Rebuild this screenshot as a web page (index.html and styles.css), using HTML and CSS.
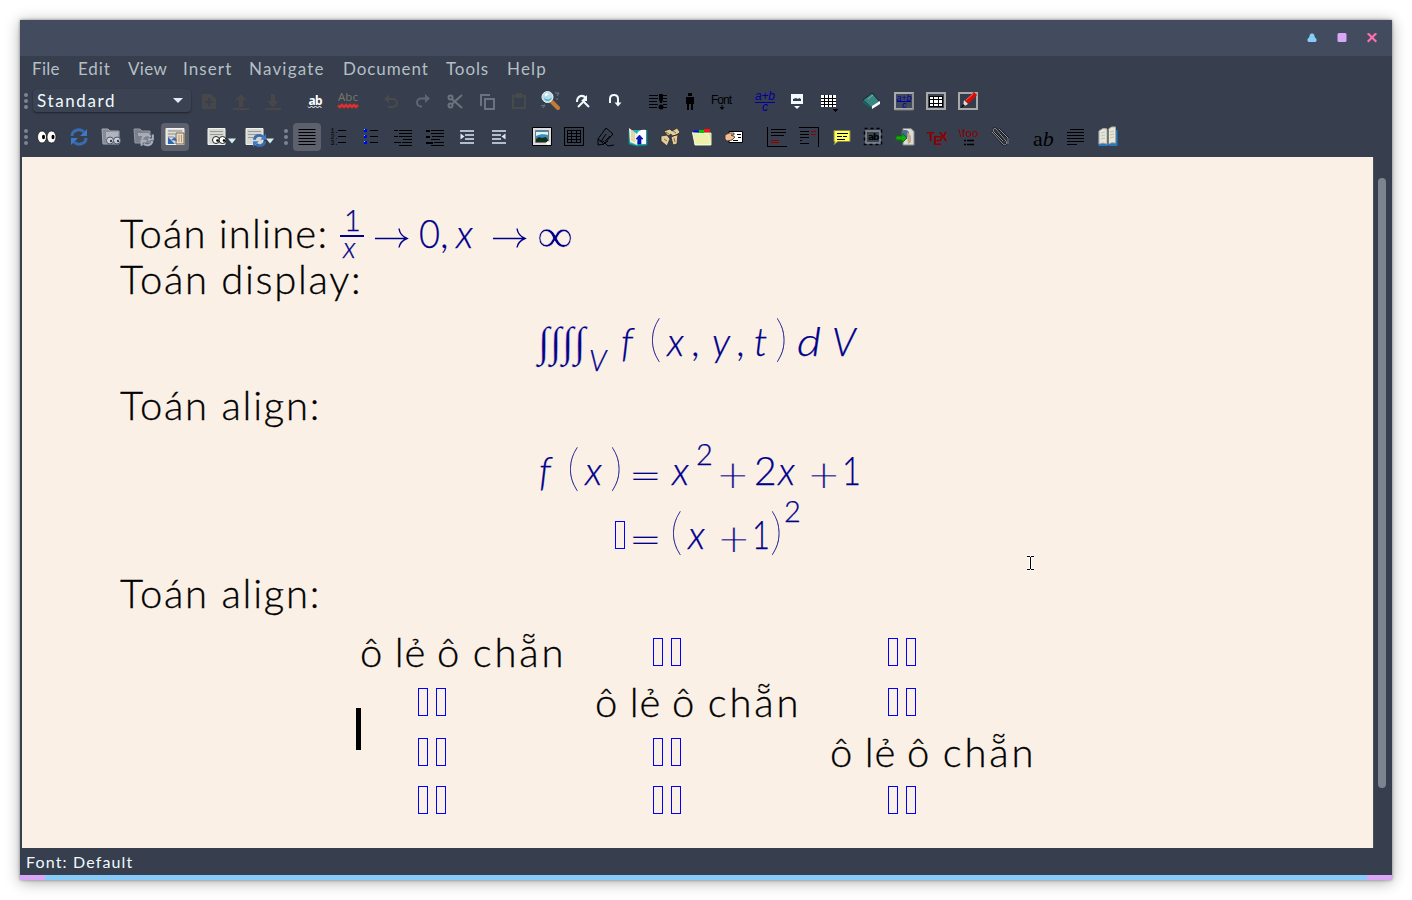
FILE: index.html
```html
<!DOCTYPE html>
<html lang="vi">
<head>
<meta charset="utf-8">
<title>LyX</title>
<link rel="stylesheet" href="styles.css">
</head>
<body>
<div class="window">
  <header class="titlebar">
    <svg class="wbtn" viewBox="0 0 10 10"><path d="M4 0.500h2l1 1 1 3 1.500 1.500v2l-1 1H1.500L.5 8V6L2 4.500l1-3z" fill="#86cdf8"/></svg>
    <svg class="wbtn" viewBox="0 0 10 10"><rect x=".5" y="0" width="9" height="9" rx="1.500" fill="#d9a7f5"/></svg>
    <svg class="wbtn" viewBox="0 0 10 10"><path d="M.7 .2l8.600 8.600M9.300 .2L.7 8.800" stroke="#ff6fae" stroke-width="2.200"/></svg>
  </header>
  <nav class="menu">
    <span class="m1">File</span><span class="m2">Edit</span><span class="m3">View</span><span class="m4">Insert</span><span class="m5">Navigate</span><span class="m6">Document</span><span class="m7">Tools</span><span class="m8">Help</span>
  </nav>

  <div class="toolbar row1">
    <svg class="handle" viewBox="0 0 4 16"><g fill="#7e848f"><circle cx="2" cy="2" r="2"/><circle cx="2" cy="8" r="2"/><circle cx="2" cy="14" r="2"/></g></svg>
    <div class="combo"><span>Standard</span><i class="caret"></i></div>
    <svg class="ic" viewBox="0 0 32 32"><path fill="#47474a" fill-rule="evenodd" d="M9 9h9l5 5v10H9zM15 13v3h-3v2h3v3h2v-3h3v-2h-3v-3z"/></svg>
    <svg class="ic" viewBox="0 0 32 32"><path fill="#47474a" d="M16 9l6 6h-4v7h-4v-7h-4zM8 23h16v2H8z"/></svg>
    <svg class="ic" viewBox="0 0 32 32"><path fill="#47474a" d="M14 9h4v7h4l-6 6-6-6h4zM8 23h16v2H8z"/></svg>
    <i class="sep"></i>
    <svg class="ic" viewBox="0 0 32 32"><text x="8.500" y="19.500" class="ab">ab</text><path d="M8 21.500l1.500 1.500 2-2 2 2 2-2 2 2 2-2 2 2" fill="none" stroke="#fff"/></svg>
    <svg class="ic" viewBox="0 0 32 32"><text x="6" y="16" class="abc">Abc</text><path d="M6 20.500l2 1.500 2-2 2 2 2-2 2 2 2-2 2 2 2-2 2 2 2-2" fill="none" stroke="#df3030" stroke-width="2.500"/></svg>
    <i class="sep"></i>
    <svg class="ic" viewBox="0 0 32 32"><path d="M14 9.500l-5 4.500 5 4.500z" fill="#4b4a4b"/><path d="M12 14h6a4 4 0 010 8h-5" fill="none" stroke="#4b4a4b" stroke-width="2"/></svg>
    <svg class="ic" viewBox="0 0 32 32"><path d="M18 9l5 4.500-5 4.500z" fill="#5e6674"/><path d="M20 13.500h-6a4 4 0 000 8h1" fill="none" stroke="#5e6674" stroke-width="2"/></svg>
    <svg class="ic" viewBox="0 0 32 32"><g fill="none" stroke="#6b7380" stroke-width="2"><circle cx="11.500" cy="12.500" r="2"/><circle cx="11.500" cy="20.500" r="2"/><path d="M13 14l10 9M13 19L23 10"/></g></svg>
    <svg class="ic" viewBox="0 0 32 32"><path d="M19 10H10v11" fill="none" stroke="#6b7380" stroke-width="2"/><path d="M14 14h9v10h-9z" fill="none" stroke="#6b7380" stroke-width="2"/></svg>
    <svg class="ic" viewBox="0 0 32 32"><path d="M10 11h12v12H10z" fill="none" stroke="#484949" stroke-width="2"/><path d="M13 8h6v5h-6z" fill="#484949"/></svg>
    <svg class="ic" viewBox="0 0 32 32"><path d="M20 8h4l-2 3M6 21l4-1-2 3M21 14h2" stroke="#717a80" fill="none"/><path d="M17 17l6 6" stroke="#c47b35" stroke-width="4" stroke-linecap="round"/><circle cx="12.500" cy="12" r="5.500" fill="#b3ddea" stroke="#e7f2f4"/><path d="M9 13a4 4 0 004 3 5 5 0 004-4c-2 3-5 3-8 1z" fill="#52a8c8"/><path d="M10 10.500l3-2" stroke="#fff" stroke-width="2"/></svg>
    <svg class="ic" viewBox="0 0 32 32"><g fill="none" stroke="#f1faff" stroke-width="2"><path d="M10 17c0-6 5-8 9-4M11 22l8-8M16 16l6 6"/></g><path d="M20 10v6h-6z" fill="#f1faff"/></svg>
    <svg class="ic" viewBox="0 0 32 32"><path d="M11 18v-4q0-4 4-4t4 4v5" fill="none" stroke="#f1faff" stroke-width="2"/><path d="M15.500 17.500h7l-3.500 4z" fill="#f1faff"/></svg>
    <i class="sep"></i>
    <svg class="ic" viewBox="0 0 32 32"><path d="M7 10.500h9M7 13.500h9M7 16.500h8M7 19.500h9M7 22.500h8M21 10.500h4M21 13.500h4M21 16.500h4M21 19.500h4M21 22.500h4" stroke="#000"/><path d="M17 9h4v5l-1 4h-2l-1-4z"/><circle cx="19" cy="22" r="2.500"/></svg>
    <svg class="ic" viewBox="0 0 32 32"><path d="M14 8h4v3h-4zM12 12h8v7h-1v6h-2v-6h-2v6h-2v-6h-1z"/></svg>
    <svg class="ic" viewBox="0 0 32 32"><text x="5" y="18.500" class="fontlbl" textLength="21">Font</text><path d="M15.500 20h1v2h2l-2.500 3-2.500-3h2z"/></svg>
    <i class="sep"></i>
    <svg class="ic" viewBox="0 0 32 32"><text x="6" y="15" class="frac" textLength="20">a+b</text><path d="M6 17.500h20" stroke="#00009c"/><text x="13" y="25.500" class="frac">c</text></svg>
    <svg class="ic" viewBox="0 0 32 32"><path d="M10 9h12v10H10z" fill="#f1faff"/><path d="M12 16v-2l3-1 2 1 1-1 2 1v2z" fill="#343c4b"/><path d="M13 21h6l-3 3z" fill="#f1faff"/></svg>
    <svg class="ic crisp" viewBox="0 0 32 32"><path d="M8 10h15v12H8z" fill="#fff"/><path d="M8 13.500h15M8 16.500h15M8 19.500h15M11.500 10v12M15.500 10v12M19.500 10v12" stroke="#000"/><path d="M20 24h5l-2.500 3z"/></svg>
    <i class="sep"></i>
    <svg class="ic" viewBox="0 0 32 32"><path d="M7 15l9-7 8 9-8 6z" fill="#3b8583" stroke="#0b2929"/><path d="M7 15v3l9 6v-2z" fill="#176163"/><path d="M16 21l8-5v3l-8 5z" fill="#fff"/><path d="M12 14l5-4" stroke="#77b4b0"/></svg>
    <svg class="ic" viewBox="0 0 32 32"><path d="M7 8h18v16H7z" fill="#40485a" stroke="#a9a9a9" stroke-width="2"/><path d="M25 8v17H7" fill="none" stroke="#777" stroke-width="1"/><text x="8.500" y="15.500" class="frac sm" textLength="15">a+b</text><path d="M9 16.500h14" stroke="#00009c"/><text x="14" y="23" class="frac sm">c</text></svg>
    <svg class="ic crisp" viewBox="0 0 32 32"><path d="M7 8h18v16H7z" fill="#3b4353" stroke="#a9a9a9" stroke-width="2"/><path d="M9.500 11.500h13v10h-13z" fill="#fff" stroke="#000"/><path d="M9 14.500h13M9 18.500h13M13.500 11v10M18.500 11v10" stroke="#000"/></svg>
    <svg class="ic" viewBox="0 0 32 32"><path d="M7 8h18v16H7z" fill="#343c4b" stroke="#a9a9a9" stroke-width="2"/><path d="M14.500 17.500L23.500 8.500" stroke="#dc0b0b" stroke-width="4.500"/><path d="M14 15l7-6" stroke="#ff6a5a"/><path d="M12 15l4 4-5 3z" fill="#ddd"/><path d="M8.500 23l3-4 1.500 2z"/></svg>
  </div>

  <div class="toolbar row2">
    <svg class="handle" viewBox="0 0 4 16"><g fill="#7e848f"><circle cx="2" cy="2" r="2"/><circle cx="2" cy="8" r="2"/><circle cx="2" cy="14" r="2"/></g></svg>
    <svg class="ic first" viewBox="0 0 32 32"><g fill="#fff" stroke="#111" stroke-width=".7"><ellipse cx="11" cy="16" rx="4.500" ry="6"/><ellipse cx="20.500" cy="16" rx="4.500" ry="6"/></g><ellipse cx="12.500" cy="16" rx="1.500" ry="2.300"/><ellipse cx="22" cy="16" rx="1.500" ry="2.300"/></svg>
    <svg class="ic" viewBox="0 0 32 32"><path d="M9 15c0-6 8-8 12-4M23 17c0 6-8 8-12 4" fill="none" stroke="#3a6bb0" stroke-width="3"/><path d="M24 8v7h-7zM8 24v-7h7z" fill="#3f78c4"/></svg>
    <svg class="ic" viewBox="0 0 32 32"><path d="M7 8h6l2 2h9v13H8z" fill="#868b98" stroke="#a5a9b4"/><path d="M11 11h12v9H11z" fill="#b0b4bf"/><g fill="#ccd0da" stroke="#4e5567"><circle cx="15" cy="19.500" r="3.500"/><circle cx="22" cy="19.500" r="3.500"/></g><circle cx="16" cy="20" r="1.200" fill="#333b4b"/><circle cx="23" cy="20" r="1.200" fill="#333b4b"/></svg>
    <svg class="ic" viewBox="0 0 32 32"><path d="M7 8h6l2 2h8v12H8z" fill="#7b808d" stroke="#9599a5"/><path d="M11 12h11v3H11z" fill="#a6aab5"/><g transform="translate(9 8) scale(.7)" stroke="#a9aeb9" fill="none" stroke-width="3"><path d="M9 15c0-6 8-8 12-4M23 17c0 6-8 8-12 4M24 8v7h-7M8 24v-7h7"/></g></svg>
    <div class="on"><svg class="ic" viewBox="0 0 32 32"><path d="M7 7.500h18v16H7z" fill="#dfe0da" stroke="#f5f5f1"/><path d="M9 10h14M9 13h7M9 16h6M9 19h3" stroke="#888" stroke-width="1.200"/><path d="M17 12h8v11h-8z" fill="#eadbc2" stroke="#7b644c"/><path d="M20 14v7M22.500 14v7" stroke="#b19a7c"/><path d="M9 16v7h7zM12 19l4-3 2 4" fill="#2f68b3"/></svg></div>
    <i class="sep"></i>
    <svg class="ic wide" viewBox="0 0 38 32"><path d="M6 7.500h17v16H6z" fill="#d5d8d2" stroke="#f1f1ed"/><path d="M8 10.500h13M8 13.500h13" stroke="#999"/><g fill="#fff" stroke="#222"><circle cx="14" cy="19" r="3.500"/><circle cx="20.500" cy="19" r="3.500"/></g><circle cx="15.500" cy="19.500" r="1.300"/><circle cx="22" cy="19.500" r="1.300"/><path d="M26 17.500h8l-4 5z" fill="#d8eeee"/></svg>
    <svg class="ic wide" viewBox="0 0 38 32"><path d="M6 7.500h17v16H6z" fill="#d5d8d2" stroke="#f1f1ed"/><path d="M8 10.500h13M8 13.500h13M8 16.500h5" stroke="#999"/><g transform="translate(8 8) scale(.72)"><path d="M9 15c0-6 8-8 12-4M23 17c0 6-8 8-12 4" fill="none" stroke="#3a6bb0" stroke-width="4"/><path d="M25 7v8h-8zM7 25v-8h8z" fill="#3f78c4"/></g><path d="M26 17.500h8l-4 5z" fill="#d8eeee"/></svg>
    <svg class="handle mid" viewBox="0 0 4 16"><g fill="#7e848f"><circle cx="2" cy="2" r="2"/><circle cx="2" cy="8" r="2"/><circle cx="2" cy="14" r="2"/></g></svg>
    <div class="on"><svg class="ic" viewBox="0 0 32 32"><path d="M7.500 8.500h17M7.500 11.500h17M7.500 14.500h17M7.500 17.500h17M7.500 20.500h17M7.500 23.500h17" stroke="#000"/></svg></div>
    <svg class="ic" viewBox="0 0 32 32"><path d="M15 9.500h8M15 15.500h8M15 21.500h8" stroke="#000"/><g class="tiny"><text x="7.500" y="12">1.</text><text x="7.500" y="18">2.</text><text x="7.500" y="24">3.</text></g></svg>
    <svg class="ic crisp" viewBox="0 0 32 32"><path d="M15 9.500h8M15 15.500h8M15 21.500h8" stroke="#000"/><path d="M9 8h3v3h-3zM9 14h3v3h-3zM9 20h3v3h-3z" fill="#00f"/><path d="M9 8h1v1h-1zM9 14h1v1h-1zM9 20h1v1h-1z" fill="#0ff"/></svg>
    <svg class="ic" viewBox="0 0 32 32"><path d="M7 9.500h4M12 9.500h13M12 12.500h13M7 15.500h4M12 15.500h13M16 18.500h9M7 21.500h7M15 21.500h10M12 24.500h13" stroke="#000"/></svg>
    <svg class="ic" viewBox="0 0 32 32"><path d="M12 9.500h13M12 12.500h13M13 15.500h12M12 18.500h9M15 21.500h10M12 24.500h13" stroke="#000"/><path d="M7 10h4M7 16h4M7 22h7" stroke="#000" stroke-width="2"/></svg>
    <svg class="ic" viewBox="0 0 32 32"><path d="M9 10h14M14 14h9M14 18h9M9 22h14" stroke="#dbe8f5" stroke-width="1.700"/><path d="M9.500 12.500v6l4-3z" fill="#dbe8f5"/></svg>
    <svg class="ic" viewBox="0 0 32 32"><path d="M9 10h14M9 14h9M9 18h9M9 22h14" stroke="#dbe8f5" stroke-width="1.700"/><path d="M22.500 12.500v6l-4-3z" fill="#dbe8f5"/></svg>
    <i class="sep"></i>
    <svg class="ic" viewBox="0 0 32 32"><path d="M6.500 6.500h19v18h-19z" fill="#ddd" stroke="#000"/><path d="M9.500 9.500h13v12h-13z" fill="#368dbd" stroke="#777"/><path d="M10 15c4-2 8-2 12-1v-3H10z" fill="#def2f4"/><path d="M10 21v-3l3-2 3 1 4-1 2 3v2z" fill="#152f17"/><path d="M22 20v4M20 22h4" stroke="#fff" stroke-width="1.500"/></svg>
    <svg class="ic crisp" viewBox="0 0 32 32"><path d="M6.500 6.500h19v18h-19z" fill="none" stroke="#000"/><path d="M9.500 9.500h13v12h-13zM9 12.500h13M9 15.500h13M9 18.500h13M13.500 10v12M18.500 10v12" fill="none" stroke="#000"/></svg>
    <svg class="ic" viewBox="0 0 32 32"><path d="M8 18l8-11 7 6-9 10-6 1zM8 18l5 4M16 13l-4 6M20 15l-5 5M10 20h3l5 5 6-1M18 20l-6 4" fill="none" stroke="#000"/></svg>
    <svg class="ic" viewBox="0 0 32 32"><path d="M7 9v14l8 2 10-1V9" fill="#20b4af" stroke="#167b79"/><path d="M7 7l8 6v11l-7-3z" fill="#f6f0dc"/><path d="M15 13q2-5 9-4v14h-8z" fill="#fff"/><path d="M12 11v10M10 9v11" stroke="#d2b77e"/><path d="M16 23v-5h-2l3.500-4 3.500 4h-2v5z" fill="#0616d0" stroke="#000080" stroke-width=".6"/></svg>
    <svg class="ic" viewBox="0 0 32 32"><path d="M10 10l6-2 2 2 5-3 3 4-3 3-5 1-1-2-3 2zM7 15l6-1 3 4-3 7-6-5zM17 16l7-3-1 10-4 1z" fill="#e2cda0" stroke="#332a1b" stroke-width=".8"/><path d="M12 11l3 2M19 10l3 2M10 18l3 2M20 17l1 4" stroke="#876f4e"/></svg>
    <svg class="ic" viewBox="0 0 32 32"><path d="M9 12h16v12H9z" fill="#d5dc8b" stroke="#eef3b5"/><path d="M6.500 11.500h4l2 1h10l2 11H9z" fill="#edf0ac" stroke="#f6f9d5"/><path d="M8 9.500h4l1 2H7z" fill="#00f"/><path d="M13 9h5v3h-5z" fill="#0c0"/><path d="M18 8h6v3h-6z" fill="#f11"/></svg>
    <svg class="ic" viewBox="0 0 32 32"><path d="M11 10.500h13.500v11H11z" fill="#fff" stroke="#000"/><path d="M19 13.500h4M20 16.500h3M15 19.500h5" stroke="#000"/><path d="M7 14l4-2h5v2h-3l4 2-3 3-5 1-2-2z" fill="#efbd91" stroke="#472c18" stroke-width=".8"/></svg>
    <i class="sep"></i>
    <svg class="ic crisp" viewBox="0 0 32 32"><path d="M6.500 6v19.500H26" stroke="#000" fill="none"/><path d="M10 8.500h15M10 11.500h15M10 14.500h13" stroke="#000"/><path d="M10 19.500h8M10 21.500h8" stroke="#900000"/></svg>
    <svg class="ic crisp" viewBox="0 0 32 32"><path d="M6 6.500h19.500V26" stroke="#000" fill="none"/><path d="M7 10.500h9M7 13.500h9M7 16.500h9M7 19.500h2M7 22.500h9" stroke="#000"/><path d="M18 10.500h5M18 13.500h5" stroke="#900000"/></svg>
    <svg class="ic" viewBox="0 0 32 32"><path d="M9 9.500h16v11H13l-4 3 1-3H9z" fill="#ffff64" stroke="#8c893d"/><path d="M12 12.500h11M12 15.500h5M18 15.500h4M12 18.500h8" stroke="#000"/></svg>
    <svg class="ic" viewBox="0 0 32 32"><path d="M9 10h14v12H9z" fill="#3b4250" stroke="#777e89" stroke-width="2"/><path d="M7.500 7.500h17v16h-17z" fill="none" stroke="#000" stroke-width="1.500" stroke-dasharray="3 3"/><text x="11" y="19" class="note">ab</text></svg>
    <svg class="ic" viewBox="0 0 32 32"><path d="M14 7.500h8l3 3V24H14z" fill="#dcdad4" stroke="#888"/><circle cx="16" cy="13" r="4" fill="#4b6a94"/><path d="M18 11l4 4v6l-3 2z" fill="#c5a78e"/><path d="M7 15h6v-3l5 5-5 5v-3H7z" fill="#13a813" stroke="#087108"/></svg>
    <svg class="ic" viewBox="0 0 32 32"><g class="tex"><text x="6" y="20">T</text><text x="12.500" y="24">E</text><text x="18" y="20">X</text></g></svg>
    <svg class="ic" viewBox="0 0 32 32"><text x="5.500" y="16" class="foo" textLength="20">\foo</text><path d="M11 19.500h2M11 23.500h2M14 19.500h7M14 23.500h7" stroke="#000" stroke-width="1.700"/></svg>
    <svg class="ic" viewBox="0 0 32 32"><path d="M7 11l11 12c2 2 5 0 3-3L11 8c-2-2-4 1-2 3l9 9M14 8l9 9v6" fill="none" stroke="#13161b" stroke-width="2"/><path d="M7 11l11 12c2 2 5 0 3-3L11 8c-2-2-4 1-2 3l9 9M14 8l9 9v6" fill="none" stroke="#9799a0"/></svg>
    <i class="sep"></i>
    <svg class="ic" viewBox="0 0 32 32"><text x="5" y="25" class="serif">a<tspan font-style="italic">b</tspan></text></svg>
    <svg class="ic" viewBox="0 0 32 32"><path d="M10 8.500h14M7 11.500h17M7 14.500h17M7 17.500h17M7 20.500h17M7 23.500h10" stroke="#000"/></svg>
    <svg class="ic" viewBox="0 0 32 32"><path d="M6.500 10v15h9l1-1 1 1h8V9z" fill="#2679be"/><path d="M7 10q4-4 8-2v15q-4-2-8 0zM16.500 8q3-3 7-2v16q-4-1-7 1z" fill="#e7e6dc" stroke="#aaa99d"/><path d="M16 8v15" stroke="#6a675e" stroke-width="1.500"/><path d="M9 12l4-1M9 15l4-1M9 18l4-1M18 11l4-1M18 14l4-1M18 17l4-1" stroke="#c3c0ae"/></svg>
  </div>

  <div class="work">
    <main class="doc">
      <div class="line l1"><span class="t1">Toán inline:</span>
        <svg class="inl" width="240" height="60" viewBox="336 203 240 60">
          <text class="mr s" x="344" y="231">1</text><path d="M340 236h24" stroke="#00008b" stroke-width="2"/><text class="mi s" x="343" y="258">x</text>
          <g class="arrow"><path d="M375 238.500h31M399 228.500q1 7 8 10q-7 3-8 9"/><path d="M493 238.500h31M517 228.500q1 7 8 10q-7 3-8 9"/></g>
          <text class="mr" x="419" y="247.500" textLength="21" lengthAdjust="spacingAndGlyphs">0</text><text class="mr" x="440" y="247.500">,</text><text class="mi" x="456" y="247.500">x</text><text class="sym" x="537" y="252" textLength="36" lengthAdjust="spacingAndGlyphs">∞</text>
        </svg></div>
      <div class="line l2"><span class="t2">Toán display:</span></div>
      <div class="eq e1"><svg width="340" height="76" viewBox="527 306 340 76">
        <g class="int"><text x="537" y="356">∫</text><text x="549" y="356">∫</text><text x="561" y="356">∫</text><text x="573" y="356">∫</text></g>
        <text class="mi s" x="588" y="371">V</text><text class="mi" x="620" y="356">f</text><text class="par" x="648" y="356">(</text><text class="mi" x="666" y="356">x</text><text class="mr" x="690" y="356">,</text><text class="mi" x="711" y="356">y</text><text class="mr" x="735" y="356">,</text><text class="mi" x="753" y="356">t</text><text class="par" x="774" y="356">)</text><text class="mi" x="796" y="356" textLength="24" lengthAdjust="spacingAndGlyphs">d</text><text class="mi" x="831" y="356">V</text>
      </svg></div>
      <div class="line l3"><span class="t3">Toán align:</span></div>
      <div class="eq e2"><svg width="340" height="136" viewBox="527 434 340 136">
        <text class="mi" x="538" y="485">f</text><text class="par" x="566" y="485">(</text><text class="mi" x="584" y="485">x</text><text class="par" x="609" y="485">)</text><text class="op" x="628" y="488">=</text><text class="mi" x="671" y="485">x</text><text class="mr s" x="695" y="465">2</text><text class="op" x="715.500" y="488">+</text><text class="mr" x="753" y="485">2</text><text class="mi" x="777" y="485">x</text><text class="op" x="806.500" y="488">+</text><text class="mr" x="841" y="485" textLength="19" lengthAdjust="spacingAndGlyphs">1</text>
        <rect x="614.500" y="521.500" width="9" height="27" fill="none" stroke="#00f"/><text class="op" x="628" y="552">=</text><text class="par" x="669" y="549">(</text><text class="mi" x="687" y="549">x</text><text class="op" x="716.500" y="552">+</text><text class="mr" x="751" y="549" textLength="18" lengthAdjust="spacingAndGlyphs">1</text><text class="par" x="769" y="549">)</text><text class="mr s" x="783" y="522">2</text>
      </svg></div>
      <div class="line l4"><span class="t3">Toán align:</span></div>
      <div class="grid">
        <b>ô lẻ</b><b>ô chẵn</b><i></i><i></i><i></i><i></i>
        <i></i><i></i><b>ô lẻ</b><b>ô chẵn</b><i></i><i></i>
        <i></i><i></i><i></i><i></i><b>ô lẻ</b><b>ô chẵn</b>
        <i></i><i></i><i></i><i></i><i></i><i></i>
      </div>
      <span class="caretbar"></span>
      <svg class="ibeam" viewBox="0 0 9 16"><path d="M1 1.500h3M5 1.500h3M1 14.500h3M5 14.500h3M4.500 2v12" fill="none" stroke="#fff" stroke-width="3"/><path d="M1 1.500h3M5 1.500h3M1 14.500h3M5 14.500h3M4.500 2v12" fill="none" stroke="#000"/></svg>
    </main>
    <div class="track"><div class="thumb"></div></div>
  </div>
  <footer class="status"><span>Font: Default</span></footer>
  <div class="edge"></div>
</div>
</body>
</html>
```
FILE: styles.css
```css
* { box-sizing: border-box; }
body { margin: 0; padding: 20px; background: #fff; height: 900px; overflow: hidden; font-family: Lato, "Open Sans", sans-serif; }
.window { width: 1372px; height: 860px; display: flex; flex-direction: column; background: #373e4d; box-shadow: 0 2px 14px rgba(0,0,0,.32), 0 0 3px rgba(0,0,0,.4); }
.titlebar { height: 36px; background: #434c5e; display: flex; justify-content: flex-end; align-items: center; gap: 20px; padding: 0 15px 0 0; }
.wbtn { width: 10px; height: 10px; }
.menu { height: 28px; display: flex; padding-left: 12px; color: #b4bfc6; font-size: 17px; line-height: 25px; letter-spacing: .3px; white-space: nowrap; }
.m1 { width: 46px; } .m2 { width: 50px; letter-spacing: .9px; } .m3 { width: 55px; } .m4 { width: 66px; letter-spacing: 1.100px; } .m5 { width: 94px; letter-spacing: 1.200px; } .m6 { width: 103px; letter-spacing: .9px; } .m7 { width: 61px; letter-spacing: .9px; } .m8 { width: 50px; letter-spacing: 1.200px; }
.toolbar { display: flex; align-items: center; }
.row1 { height: 34px; padding-bottom: 1px; }
.row2 { height: 39px; padding-bottom: 1px; }
.handle { width: 4px; height: 16px; margin-left: 4px; flex: none; }
.mid { margin: 0 3px 0 6px; }
.combo { width: 158px; height: 23px; margin: 0 2px 0 5px; padding: 0 8px 0 4px; border-radius: 4px; background: #3b4252; box-shadow: 0 1px 2px rgba(0,0,0,.45); display: flex; align-items: center; justify-content: space-between; color: #eefaff; font-size: 17px; letter-spacing: 1.600px; line-height: 21px; padding-bottom: 1px; }
.caret { border: 5px solid transparent; border-top-color: #e0edf2; border-bottom: 0; }
.ic { width: 32px; height: 32px; flex: none; display: block; }
.crisp { shape-rendering: crispEdges; }
.wide { width: 38px; }
.first { margin-left: 3px; }
.sep { width: 11px; flex: none; }
.on { width: 28px; height: 28px; margin: 0 2px; border-radius: 4px; background: #5d616e; display: flex; align-items: center; justify-content: center; }
.ab { font: bold 12px "Noto Sans"; fill: #fff; letter-spacing: -.6px; }
.abc { font: 11.500px "Noto Sans"; fill: #777568; }
.fontlbl { font: 12px "Liberation Sans"; }
.frac { font: italic 12px "Liberation Sans"; fill: #00009c; }
.frac.sm { font-size: 9px; }
.tiny { font: 6.500px "Liberation Mono"; }
.note { font: bold 9px "DejaVu Sans"; letter-spacing: -1px; }
.tex { font: bold 13px "Liberation Sans"; fill: #8b0000; }
.foo { font: 11.500px "Liberation Sans"; fill: #8b0000; }
.serif { font: 22px "Liberation Serif"; }
.work { height: 691px; display: flex; padding-left: 2px; }
.doc { width: 1351px; background: #faf0e6; padding-top: 51px; position: relative; color: #000; font-weight: 300; font-size: 40px; -webkit-text-stroke: .3px #000; }
.line { padding-left: 98px; display: flex; white-space: nowrap; line-height: 51px; }
.l1 { height: 52px; } .l2 { height: 46px; line-height: 38px; } .l3 { height: 52px; line-height: 46px; } .l4 { height: 56px; line-height: 46px; }
.t1 { width: 216px; letter-spacing: 1.200px; } .t2 { letter-spacing: 1.700px; } .t3 { letter-spacing: 1.750px; }
.inl { margin-top: -5px; flex: none; -webkit-text-stroke: 0; }
.eq { display: flex; justify-content: center; -webkit-text-stroke: 0; }
.e1 { height: 76px; } .e2 { height: 136px; }
.mr, .mi { font-weight: 300; font-size: 39px; fill: #00008b; stroke: #00008b; stroke-width: .25px; }
.mi { font-style: italic; }
.mr.s, .mi.s { font-size: 29px; }
.arrow { fill: none; stroke: #00008b; stroke-width: 1.400; }
.sym { font: 48px "Liberation Serif"; fill: #00008b; stroke: #faf0e6; stroke-width: .6px; }
.int { font: italic 42px "Liberation Serif"; fill: #00008b; stroke: #faf0e6; stroke-width: .4px; }
.par { font: 100 50px Lato; fill: #00008b; stroke: #00008b; stroke-width: .2px; }
.op { font: 200 39px "DejaVu Sans"; fill: #00008b; stroke: #faf0e6; stroke-width: .25px; }
.grid { display: grid; grid-template-columns: repeat(3, 67px 168px); grid-template-rows: 50px 50px 50px 48px; margin: 2px 0 0 339px; line-height: 48px; white-space: nowrap; }
.grid b { font-weight: 300; letter-spacing: .8px; margin-left: -1px; }
.grid b + b { padding-left: 10px; letter-spacing: 2.800px; word-spacing: -3px; }
.grid i { width: 10px; height: 28px; border: 1px solid #00f; margin: 10px 0 0 8px; }
.grid i:nth-child(odd) { justify-self: end; margin-left: 0; }
.grid i:nth-child(n+19) { margin-top: 8px; }
.caretbar { position: absolute; left: 334px; top: 551px; width: 5px; height: 42px; background: #000; }
.ibeam { position: absolute; left: 1004px; top: 398px; width: 9px; height: 16px; }
.track { width: 19px; border-left: 1px solid #4b4f5d; padding: 21px 0 0 4px; }
.thumb { width: 8px; height: 610px; border-radius: 4px; background: #7c858f; }
.status { height: 27px; padding-left: 6px; color: #eefaff; font-size: 16px; line-height: 27px; letter-spacing: 1.150px; }
.edge { height: 5px; background: linear-gradient(90deg, #d9a7f5 25px, #88cdf9 25px, #88cdf9 1347px, #d9a7f5 1347px); }
```
